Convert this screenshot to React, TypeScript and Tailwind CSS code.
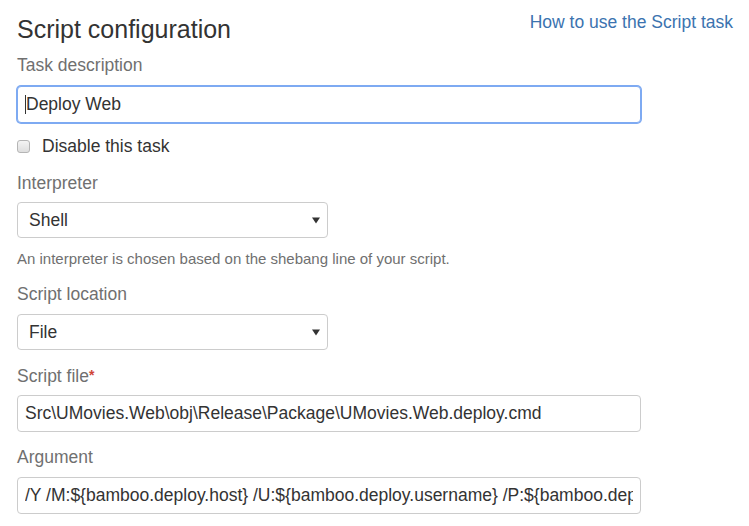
import React from "react";

const font = { fontFamily: '"Liberation Sans", Arial, sans-serif' };

function Label({ children, className = "" }: { children: React.ReactNode; className?: string }) {
  return <div className={`text-[17.5px] leading-[24px] text-[#707070] ${className}`}>{children}</div>;
}

function Select({ value, className = "" }: { value: string; className?: string }) {
  return (
    <div
      className={`flex h-[36px] w-[311px] items-center justify-between rounded-[4px] border border-[#cccccc] bg-white pl-[11px] pr-[7px] text-[17.5px] text-[#333333] ${className}`}
    >
      <span>{value}</span>
      <svg width="8" height="8" viewBox="0 0 8 8">
        <path d="M0 1.5 H8 L4 7.5 Z" fill="#333333" />
      </svg>
    </div>
  );
}

function TextBox({ value, className = "", focused = false, caret = false }: { value: string; className?: string; focused?: boolean; caret?: boolean }) {
  return (
    <div
      className={`flex h-[37px] w-[624px] items-center rounded-[4px] border bg-white px-[7px] text-[17.5px] text-[#333333] ${
        focused ? "border-[#7eaaf2] shadow-[0_0_0_1px_#7eaaf2]" : "border-[#cccccc]"
      } ${className}`}
    >
      <div className="flex min-w-0 flex-1 items-center overflow-hidden whitespace-nowrap">
        {caret && <span className="inline-block h-[19px] w-px shrink-0 bg-[#333333]" />}
        <span>{value}</span>
      </div>
    </div>
  );
}

export default function App() {
  return (
    <div style={font} className="min-h-[526px] w-[749px] bg-white pl-[17px] pr-[16px] pt-[10px] text-[#333333]">
      <div className="flex items-start justify-between">
        <h1 className="mt-[5px] text-[25px] font-normal leading-[28px] text-[#333333]">Script configuration</h1>
        <a className="text-[17.5px] leading-[24px] text-[#3b73af]" href="#">
          How to use the Script task
        </a>
      </div>

      <Label className="mt-[10px]">Task description</Label>
      <TextBox className="mt-[9px] h-[36px]" value="Deploy Web" focused caret />

      <div className="mt-[11px] flex items-center text-[17.5px] leading-[24px] text-[#333333]">
        <span className="inline-block h-[13px] w-[13px] rounded-[3px] border border-[#b5b5b5] bg-gradient-to-b from-[#f4f4f4] to-[#dedede]" />
        <span className="ml-[12px]">Disable this task</span>
      </div>

      <Label className="mt-[13px]">Interpreter</Label>
      <Select className="mt-[7px]" value="Shell" />
      <div className="mt-[11px] text-[15px] leading-[20px] text-[#707070]">
        An interpreter is chosen based on the shebang line of your script.
      </div>

      <Label className="mt-[13px]">Script location</Label>
      <Select className="mt-[8px]" value="File" />

      <Label className="mt-[14px]">
        Script file<sup className="relative top-[-2px] text-[14px] font-bold text-[#d04437]">*</sup>
      </Label>
      <TextBox className="mt-[7px]" value="Src\UMovies.Web\obj\Release\Package\UMovies.Web.deploy.cmd" />

      <Label className="mt-[13px]">Argument</Label>
      <TextBox
        className="mt-[8px]"
        value="/Y /M:${bamboo.deploy.host} /U:${bamboo.deploy.username} /P:${bamboo.deploy.password}"
      />
    </div>
  );
}
